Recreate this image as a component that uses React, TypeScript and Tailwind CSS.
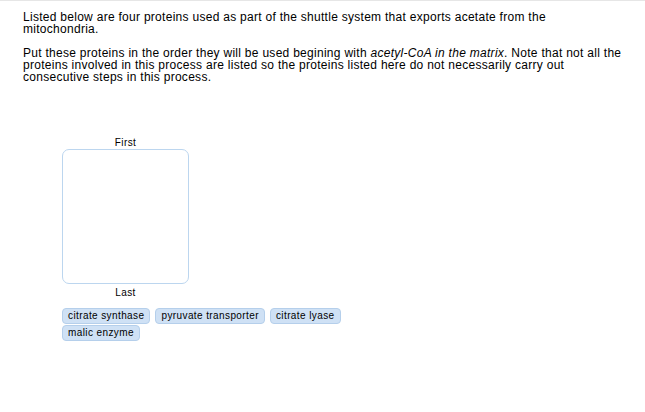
import React from "react";

export default function App() {
  const chips = ["citrate synthase", "pyruvate transporter", "citrate lyase", "malic enzyme"];
  return (
    <div className="w-[645px] h-[412px] bg-white border-t border-[#e6e6e6] text-black" style={{ fontFamily: '"Liberation Sans", Arial, sans-serif' }}>
      <div className="pl-[23px] w-[625px] pt-[10px] text-[12px] leading-[12px] tracking-[0.28px]">
        <p>Listed below are four proteins used as part of the shuttle system that exports acetate from the mitochondria.</p>
        <p className="mt-[12px]">
          Put these proteins in the order they will be used begining with <i>acetyl-CoA in the matrix</i>. Note that not all the proteins involved in this process are listed so the proteins listed here do not necessarily carry out consecutive steps in this process.
        </p>
      </div>
      <div className="ml-[62px] mt-[54px] w-[127px] flex flex-col items-center tracking-[0.4px]">
        <div className="text-[10px] leading-[12px]">First</div>
        <div className="w-[127px] h-[135px] border border-[#bcd6ef] rounded-[7px]" />
        <div className="text-[10px] leading-[12px] mt-[3px]">Last</div>
      </div>
      <div className="ml-[62px] mt-[9px] flex flex-wrap gap-x-[5px] gap-y-[1px] w-[290px]">
        {chips.map((c) => (
          <div key={c} className="h-[16px] px-[5px] flex items-center rounded-[4px] bg-[#cfe1f5] border border-[#b5cfeb] text-[10px] leading-[12px] tracking-[0.4px]">
            {c}
          </div>
        ))}
      </div>
    </div>
  );
}
